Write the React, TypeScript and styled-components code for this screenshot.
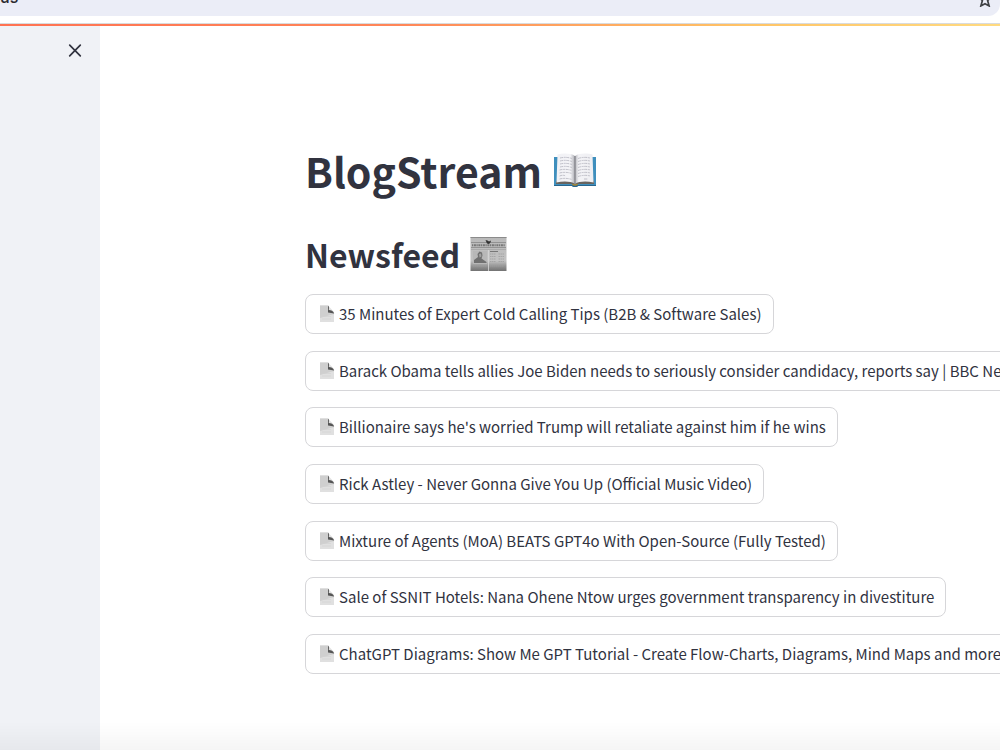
import React from "react";
import styled, { createGlobalStyle } from "styled-components";

const GlobalStyle = createGlobalStyle`
  *, *::before, *::after { box-sizing: border-box; }
  body {
    margin: 0;
    background: #fff;
    color: #31333f;
    font-family: "Source Sans Pro", "Noto Sans CJK SC", "Noto Sans", sans-serif;
  }
`;

const Page = styled.div`
  min-height: 100vh;
  display: flex;
  flex-direction: column;
  overflow: hidden;
`;

const BrowserBar = styled.header`
  height: 16px;
  flex: none;
  display: flex;
  justify-content: space-between;
  align-items: flex-end;
  padding: 0 8px 9px 0;
  overflow: hidden;
  background: #ebedf7;
  border-bottom-right-radius: 12px;
`;

const TabLabel = styled.span`
  font: 500 16px/20px Inter, sans-serif;
  color: #2b2b30;
`;

const StarButton = styled.button`
  display: flex;
  padding: 0;
  border: 0;
  background: none;
  color: #3f4145;
`;

const Toolbar = styled.div`
  height: 8px;
  flex: none;
  border-bottom: 1px solid #d9dbdd;
`;

const Decoration = styled.div`
  height: 2px;
  flex: none;
  background: linear-gradient(90deg, #ff7252 0%, #ff8658 40%, #ffc466 75%, #ffda80 100%);
`;

const Body = styled.div`
  flex: 1;
  display: flex;
`;

const Sidebar = styled.aside`
  width: 100px;
  flex: none;
  display: flex;
  justify-content: flex-end;
  align-items: flex-start;
  padding: 15px 16px 0 0;
  background: #f0f2f6;
`;

const CloseButton = styled.button`
  display: flex;
  padding: 0;
  border: 0;
  background: none;
  color: #31333f;
`;

const Main = styled.main`
  flex: 1;
  min-width: 0;
  padding: 114px 0 75px 205px;
`;

const Title = styled.h1`
  margin: 0;
  display: flex;
  align-items: center;
  gap: 11px;
  font-size: 41px;
  line-height: 60px;
  font-weight: 700;
`;

const Subtitle = styled.h2`
  margin: 26px 0 12px;
  display: flex;
  align-items: center;
  gap: 10px;
  font-size: 32px;
  line-height: 56px;
  font-weight: 600;
`;

const Feed = styled.ul`
  margin: 0;
  padding: 0;
  min-height: 380px;
  list-style: none;
  display: flex;
  flex-direction: column;
  justify-content: space-between;
`;

const FeedButton = styled.button`
  height: 40px;
  display: flex;
  align-items: center;
  gap: 4px;
  padding: 0 11px 0 13px;
  border: 1px solid #d6d6d9;
  border-radius: 8px;
  background: #fff;
  color: #31333f;
  font-family: inherit;
  font-size: 15px;
  line-height: 24px;
  white-space: nowrap;
`;

const BottomShade = styled.div`
  position: fixed;
  inset: auto 0 0;
  height: 28px;
  pointer-events: none;
  background: linear-gradient(rgba(0, 0, 0, 0), rgba(0, 0, 0, 0.04));
`;

const articles = [
  "35 Minutes of Expert Cold Calling Tips (B2B & Software Sales)",
  "Barack Obama tells allies Joe Biden needs to seriously consider candidacy, reports say | BBC News",
  "Billionaire says he's worried Trump will retaliate against him if he wins",
  "Rick Astley - Never Gonna Give You Up (Official Music Video)",
  "Mixture of Agents (MoA) BEATS GPT4o With Open-Source (Fully Tested)",
  "Sale of SSNIT Hotels: Nana Ohene Ntow urges government transparency in divestiture",
  "ChatGPT Diagrams: Show Me GPT Tutorial - Create Flow-Charts, Diagrams, Mind Maps and more",
];

function StarIcon() {
  return (
    <svg width="14" height="14" viewBox="0 0 14 14" fill="none" stroke="currentColor" strokeWidth="1.7" aria-hidden="true">
      <path d="M7 .6l1.600 3.800 4.100.4-3.100 2.700 1.500 5.400L7 10.700l-4.100 2.200 1.500-5.400L1.300 4.800l4.100-.4z" />
    </svg>
  );
}

function CloseIcon() {
  return (
    <svg width="18" height="18" viewBox="0 0 18 18" fill="none" stroke="currentColor" strokeWidth="1.7" strokeLinecap="round" aria-hidden="true">
      <path d="M3.700 4.200l10.600 10.600M14.300 4.200L3.700 14.800" />
    </svg>
  );
}

function BookIcon() {
  return (
    <svg width="44" height="34" viewBox="0 0 44 34" aria-hidden="true">
      <defs>
        <linearGradient id="pageLeft" x1="0" x2="1">
          <stop offset="0" stopColor="#f1f1f5" />
          <stop offset=".75" stopColor="#f4f4f7" />
          <stop offset="1" stopColor="#aaabb2" />
        </linearGradient>
        <linearGradient id="pageRight" x1="0" x2="1">
          <stop offset="0" stopColor="#b5b6bc" />
          <stop offset=".2" stopColor="#f3f3f6" />
          <stop offset="1" stopColor="#eeeef2" />
        </linearGradient>
      </defs>
      <path d="M1 4h42v29H25c-1 1.400-5 1.400-6 0H1z" fill="#3f8fbd" />
      <path d="M1 32h42v1H25c-1 1.400-5 1.400-6 0H1z" fill="#28658d" />
      <path d="M3 28l2-1h34l2 1v3H25l-3 1-3-1H3z" fill="#68645f" />
      <path d="M19 31h6v1l-3 1-3-1z" fill="#9a8440" />
      <path d="M4.500 1.500C10 0 18 0 22 3v28c-4-3-12-3-18.500-1.500z" fill="url(#pageLeft)" />
      <path d="M39.500 1.500C34 0 26 0 22 3v28c4-3 12-3 18.500-1.500z" fill="url(#pageRight)" />
      <path d="M22 3v28" stroke="#77777d" strokeWidth="1" />
      <g stroke="#b4b4be" strokeWidth=".8" strokeDasharray="3 .7 2 .6" fill="none">
        <path d="M7 5q6-1.500 12 .5M7 8q6-1.500 12 .5M7 11q6-1.500 12 .5M7 14q6-1.500 12 .5M6.500 17q6-1.500 12.500.5M6.500 20q6-1.500 12.500.5M6.500 23q4-1.500 6 0M6.500 26q6-1.500 12.500.5" />
        <path d="M25 5.500q6-2 12-.5M25 8.500q6-2 12-.5M25 11.500q6-2 12-.5M25 14.500q6-2 12-.5M25 17.500q6-2 12.500-.5M25 20.500q6-2 12.500-.5M25 23.500q6-2 12.500-.5M31 26h4" />
      </g>
    </svg>
  );
}

function NewspaperIcon() {
  return (
    <svg width="37" height="34" viewBox="0 0 37 34" aria-hidden="true">
      <defs>
        <linearGradient id="newsprint" x1="0" x2="0" y1="0" y2="1">
          <stop offset="0" stopColor="#b9b9b9" />
          <stop offset=".7" stopColor="#c2c2c2" />
          <stop offset=".85" stopColor="#969696" />
          <stop offset="1" stopColor="#727272" />
        </linearGradient>
      </defs>
      <path d="M.5 0h36v34H.5z" fill="url(#newsprint)" />
      <path d="M.5.5h36" stroke="#8b8b8b" />
      <path d="M1 5.500h35M1 10.500h35" stroke="#888" strokeWidth=".8" />
      <path d="M15.500 3l2 .5 1.500 1 2-1-.5 2-1.500 1.500-2-.5z" fill="#333" />
      <path d="M2 8.300h33" stroke="#777" strokeWidth="2" strokeDasharray="1.200 .7 2 .6" />
      <path d="M1 12.500h35" stroke="#9c9c9c" strokeWidth=".6" />
      <path d="M3 14h14v13H3z" fill="#b8b8b8" />
      <path d="M4 26v-3l4-3-.5-3 2-2.500 2.500 1 .5 3-1 3 5 3.500V26z" fill="#707070" />
      <path d="M9 17l2-.5.5 3-2 1z" fill="#a2a2a2" />
      <path d="M20 14.500h8" stroke="#777" />
      <path d="M20 17h6M20 19.500h6M20 22h6M20 24.500h6M28.500 17H34M28.500 19.500H34M28.500 22H34M28.500 24.500H34M3 29h14M20 29h14" stroke="#a0a0a0" strokeWidth=".8" strokeDasharray="1.500 .5" />
      <path d="M18.500 13v21" stroke="#d8d8d8" strokeWidth=".8" />
    </svg>
  );
}

function DocumentIcon() {
  return (
    <svg width="16" height="18" viewBox="0 0 16 18" aria-hidden="true">
      <path d="M1 .5h8L15 7v10H1z" fill="#e0e0e0" />
      <path d="M1 .5h8V6l6 2v1L1 13z" fill="#cfcfcf" />
      <path d="M9 .5c1.500 1 .8 3.500.8 4.500 2.200 0 4.700 1 5.400 3.500L9 7.500z" fill="#555" />
      <path d="M3 9h9M3 11.500h9M3 14h9" stroke="#d0d0d0" strokeWidth=".6" />
    </svg>
  );
}

export default function App() {
  return (
    <Page>
      <GlobalStyle />
      <BrowserBar>
        <TabLabel>us</TabLabel>
        <StarButton aria-label="Bookmark this page"><StarIcon /></StarButton>
      </BrowserBar>
      <Toolbar />
      <Decoration />
      <Body>
        <Sidebar>
          <CloseButton aria-label="Close sidebar"><CloseIcon /></CloseButton>
        </Sidebar>
        <Main>
          <Title>BlogStream <BookIcon /></Title>
          <Subtitle>Newsfeed <NewspaperIcon /></Subtitle>
          <Feed>
            {articles.map((title) => (
              <li key={title}>
                <FeedButton><DocumentIcon />{title}</FeedButton>
              </li>
            ))}
          </Feed>
        </Main>
      </Body>
      <BottomShade />
    </Page>
  );
}
